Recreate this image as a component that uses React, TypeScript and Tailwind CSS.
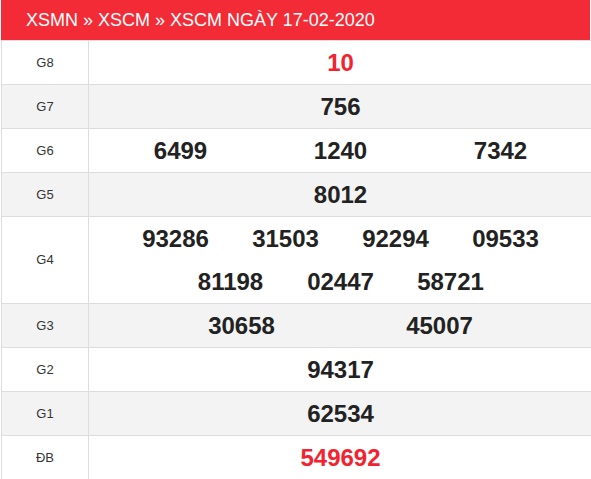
const rows: { label: string; lines: string[][]; red?: boolean; width: string }[] = [
  { label: 'G8', lines: [['10']], red: true, width: 'w-[160px]' },
  { label: 'G7', lines: [['756']], width: 'w-[160px]' },
  { label: 'G6', lines: [['6499', '1240', '7342']], width: 'w-[160px]' },
  { label: 'G5', lines: [['8012']], width: 'w-[160px]' },
  {
    label: 'G4',
    lines: [
      ['93286', '31503', '92294', '09533'],
      ['81198', '02447', '58721'],
    ],
    width: 'w-[110px]',
  },
  { label: 'G3', lines: [['30658', '45007']], width: 'w-[198px]' },
  { label: 'G2', lines: [['94317']], width: 'w-[160px]' },
  { label: 'G1', lines: [['62534']], width: 'w-[160px]' },
  { label: 'ĐB', lines: [['549692']], red: true, width: 'w-[160px]' },
]

export default function App() {
  return (
    <div className="w-[591px] h-[479px] overflow-hidden bg-white font-['Liberation_Sans',Arial,sans-serif]">
      <div className="ml-[1px] w-[590px]">
        <div className="h-[40px] bg-[#f32b37] pl-[25px] mr-[1px] flex items-center text-white text-[18px]">
          XSMN » XSCM » XSCM NGÀY 17-02-2020
        </div>
        <div className="border-t border-l border-[#dddddd]">
          {rows.map((row, i) => (
            <div
              key={row.label}
              className={`flex border-b border-[#dddddd] ${i % 2 === 1 ? 'bg-[#f3f3f3]' : 'bg-white'}`}
            >
              <div className="w-[87px] shrink-0 border-r border-[#dddddd] flex items-center justify-center text-[13px] text-[#333333]">
                {row.label}
              </div>
              <div className="flex-1 flex flex-col pl-[1px]">
                {row.lines.map((line, j) => (
                  <div key={j} className="h-[43px] flex items-center justify-center">
                    {line.map((n) => (
                      <span
                        key={n}
                        className={`${row.width} text-center text-[24px] font-bold ${row.red ? 'text-[#f3222f]' : 'text-[#222222]'}`}
                      >
                        {n}
                      </span>
                    ))}
                  </div>
                ))}
              </div>
            </div>
          ))}
        </div>
      </div>
    </div>
  )
}
